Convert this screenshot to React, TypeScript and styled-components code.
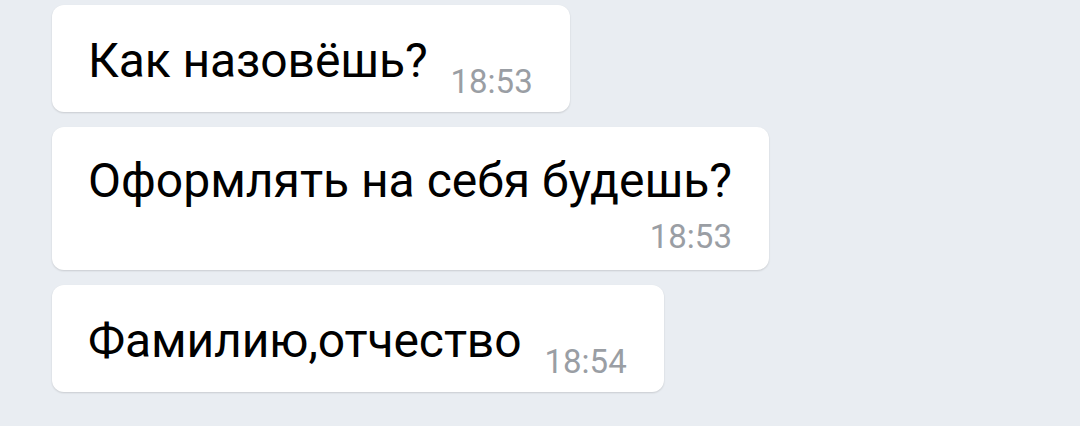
import { createGlobalStyle, styled } from 'styled-components'

const GlobalStyle = createGlobalStyle`
  html, body {
    margin: 0;
    padding: 0;
    background: #e9edf2;
    font-family: Roboto, "Noto Sans", sans-serif;
  }
`

const Feed = styled.div`
  display: flex;
  flex-direction: column;
  align-items: flex-start;
  gap: 15px;
  padding: 5px 0 0 52px;
  height: 426px;
  box-sizing: border-box;
  overflow: hidden;
`

const Bubble = styled.div<{ $stacked?: boolean }>`
  display: flex;
  flex-direction: ${(p) => (p.$stacked ? 'column' : 'row')};
  align-items: flex-end;
  gap: ${(p) => (p.$stacked ? '8px' : '23px')};
  padding: ${(p) => (p.$stacked ? '25px 37px 14px 36px' : '27px 37px 11px 36px')};
  background: #ffffff;
  border-radius: 12px;
  box-shadow: 0 1px 2px rgba(0, 0, 0, 0.14);
`

const Message = styled.span<{ $stacked?: boolean }>`
  align-self: flex-start;
  font-size: 48px;
  line-height: 58px;
  letter-spacing: ${(p) => (p.$stacked ? '0' : '-0.1px')};
  color: #000000;
  margin-bottom: ${(p) => (p.$stacked ? '0' : '11px')};
`

const Time = styled.span`
  font-size: 33px;
  line-height: 38px;
  color: #9a9ea4;
`

const messages = [
  { text: 'Как назовёшь?', time: '18:53' },
  { text: 'Оформлять на себя будешь?', time: '18:53', stacked: true },
  { text: 'Фамилию,отчество', time: '18:54' },
]

const App = () => {
  return (
    <>
      <GlobalStyle />
      <Feed>
        {messages.map((m) => (
          <Bubble key={m.text} $stacked={m.stacked}>
            <Message $stacked={m.stacked}>{m.text}</Message>
            <Time>{m.time}</Time>
          </Bubble>
        ))}
      </Feed>
    </>
  )
}

export default App
